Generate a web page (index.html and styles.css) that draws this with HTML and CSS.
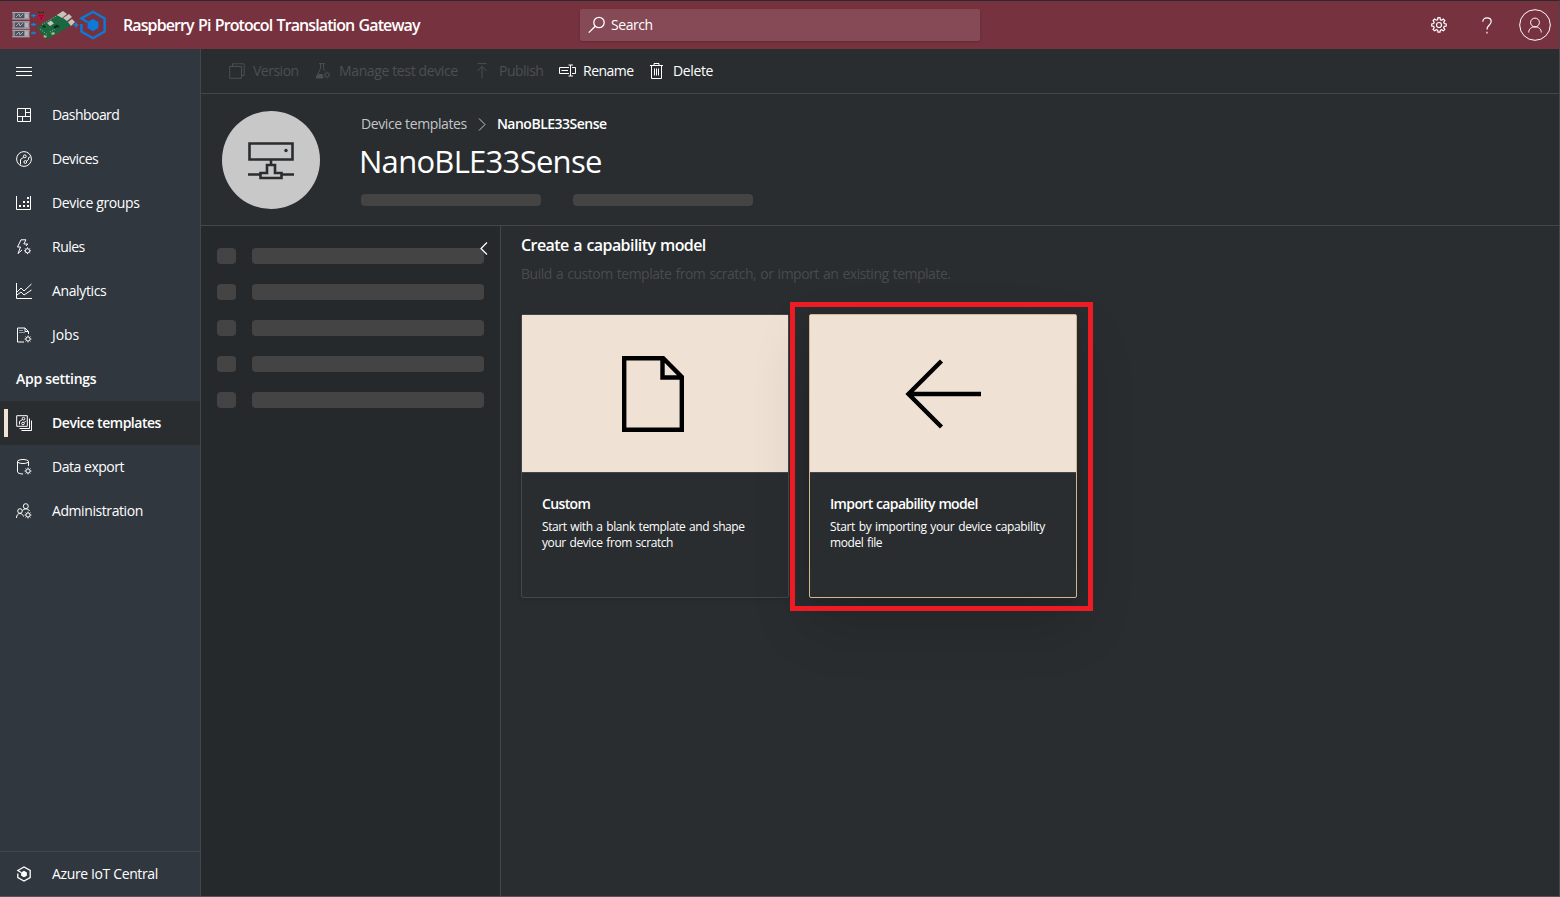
FILE: index.html
```html
<!DOCTYPE html>
<html lang="en">
<head>
<meta charset="utf-8">
<title>NanoBLE33Sense - Raspberry Pi Protocol Translation Gateway</title>
<link rel="stylesheet" href="styles.css">
</head>
<body>
<svg class="defs" width="0" height="0">
  <defs>
    <symbol id="cog" viewBox="0 0 16 16">
      <path d="M7 .7h2l.4 2 1.2.5 1.7-1.1 1.5 1.5-1.1 1.7.5 1.3 2 .4v2l-2 .4-.5 1.2 1.1 1.7-1.5 1.5-1.7-1.1-1.2.5-.4 2H7l-.4-2-1.3-.5-1.7 1.1-1.5-1.5 1.1-1.7-.5-1.2-2-.4V7l2-.4.5-1.3-1.1-1.7 1.5-1.5 1.7 1.1 1.3-.5z"/>
      <circle cx="8" cy="8" r="2.5"/>
    </symbol>
    <symbol id="mini-cog" viewBox="0 0 8 8">
      <circle cx="4" cy="4" r="2.1"/>
      <path d="M4 .6v1.2M4 6.2v1.2M.6 4h1.2M6.2 4h1.2M1.6 1.6l.8.8M5.600 5.600l.8.8M6.400 1.600l-.8.8M2.400 5.600l-.8.8"/>
    </symbol>
    <symbol id="hub" viewBox="0 0 28 30">
      <path d="M8.600 12.300L2.400 8.400 14 1.800l11.600 6.600v13.200L14 28.200 2.400 21.600V14"/>
      <path class="solid" d="M14 9l5.400 3v6.100L14 21.200l-5.400-3.100V12z"/>
    </symbol>
  </defs>
</svg>
<div class="app">
  <header class="topbar">
    <div class="brand">
      <svg class="logo" width="96" height="32" viewBox="0 0 96 32">
        <g>
          <path fill="#8d8993" d="M1.500 3h17v7.500h-17zM1.500 12.200h17v7.500h-17zM1.500 20.800h17v7.500h-17z"/>
          <path fill="#4b525e" d="M4 4.200h9v5H4zM4 13.400h9v5H4zM4 22h9v5H4z"/>
          <path fill="#b4b2b8" d="M14 4.500h3.500v4.500H14zM14 13.700h3.500v4.500H14zM14 22.300h3.500v4.500H14z"/>
          <path fill="none" stroke="#aeb6c4" stroke-width=".9" d="M5 8l3-3 1 3 3-3M5 17l3-3 1 3 3-3M5 26l3-3 1 3 3-3"/>
          <path fill="none" stroke="#c9c4ca" stroke-dasharray="1 1" d="M1.500 3.500h17M1.500 10h17M1.500 12.700h17M1.500 19.200h17M1.500 21.300h17M1.500 27.800h17"/>
        </g>
        <path fill="none" stroke="#1681d6" stroke-width="1.300" d="M20 6.700h5M22.500 5v3.500M20 15.500h5M22.500 14v3M20 24h5M22.500 22.500v3"/>
        <path fill="#173d16" d="M27 2l3 1.500L33 2l-.5 2.500h-5z"/>
        <path fill="#bd123f" d="M28 4.500h4.500l1.500 3-1.500 3-2.500 1.500-2.500-1.500L26.500 7z"/>
        <path fill="#4b0a25" d="M28.300 6h1.200v1.500h-1.200zM31 6h1.200v1.500H31zM29.600 8.500h1.300v1.700h-1.300z"/>
        <path fill="#1b6740" d="M26 18.500L47 5.500l15 9.500-22 13.500-5 1.500z"/>
        <path fill="#c6c5bb" d="M46 6l6-4 4 3-5 4zM52 9l6-4 3 3-5 4zM57 13l4-3 3 3-4 4zM36 14l4-2.500 3 3-4 2.500z"/>
        <path fill="#0c2d26" d="M31 17l2-1 2 2-2 1zM42 18l4-2.500 3 2.500-4 2.500z"/>
        <path stroke="#9eb394" stroke-dasharray="1 1.500" d="M31 15.500L47 6M29 20l8 6M39 23l9-5"/>
        <path fill="#c8b06c" d="M33 26l3 1-1.500 2-2-1zM40 24l3-1 1 2-3 1z"/>
        <path fill="none" stroke="#1681d6" stroke-width="1.600" d="M62.500 16h5M65 13.500v5"/>
        <use href="#hub" class="logo-hub" x="68" y="1" width="28" height="30"/>
      </svg>
      <span class="app-title">Raspberry Pi Protocol Translation Gateway</span>
    </div>
    <div class="search">
      <svg class="icon" width="18" height="18" viewBox="0 0 18 18"><circle cx="11" cy="6.500" r="5.200"/><path d="M7.200 10.200L.8 16.600"/></svg>
      <span class="t-search">Search</span>
    </div>
    <div class="tools">
      <svg class="icon" width="16" height="16"><use href="#cog"/></svg>
      <svg class="icon help" width="10" height="17" viewBox="0 0 10 17"><path d="M.8 4.800C.8 2.300 2.500.9 5 .9s4.200 1.400 4.200 3.700C9.200 8 5 8 5 12.400"/><path d="M5 14.800v1.600"/></svg>
      <svg class="icon user" width="32" height="32" viewBox="0 0 32 32"><circle cx="16" cy="16" r="15.300"/><circle cx="16" cy="13.500" r="4.400"/><path d="M9.700 23.500c0-3.600 2.700-5.600 6.300-5.600s6.300 2 6.300 5.600"/></svg>
    </div>
  </header>
  <div class="shell">
    <nav class="sidebar">
      <div class="nav-item"><svg class="icon" width="16" height="16" viewBox="0 0 16 16"><path d="M0 4.500h16M0 8.500h16M0 12.500h16"/></svg></div>
      <div class="nav-item"><svg class="icon" width="16" height="16" viewBox="0 0 16 16"><path d="M1.500 1.500h13v13h-13zM9.500 1.500v8M1.500 9.500h13M9.500 5.500h5M6.500 9.500v5"/></svg><span class="t-dash">Dashboard</span></div>
      <div class="nav-item"><svg class="icon" width="16" height="16" viewBox="0 0 16 16"><circle cx="8" cy="8" r="7.400"/><circle cx="8.800" cy="5.300" r="1.400"/><circle cx="9.300" cy="11" r="1.400"/><path d="M7.700 6.300L4.500 8.500v5M10.500 10.200l2-1.700V6.700l2-1"/></svg><span class="t-devices">Devices</span></div>
      <div class="nav-item"><svg class="icon" width="16" height="16" viewBox="0 0 16 16"><path d="M.5 1v13.500h14V1"/><path class="solid-dots" d="M3 10h2v2H3zM7 10h2v2H7zM11 10h2v2h-2zM7 6h2v2H7zM11 6h2v2h-2zM11 2h2v2h-2z"/></svg><span class="t-groups">Device groups</span></div>
      <div class="nav-item"><svg class="icon" width="16" height="16" viewBox="0 0 16 16"><path d="M5 .8h5L7.800 5h4L10 7M5 .8L1.500 8h3L2 14.500l4-3.500"/><use href="#mini-cog" x="7.500" y="7.800" width="8" height="8"/></svg><span class="t-rules">Rules</span></div>
      <div class="nav-item"><svg class="icon" width="16" height="16" viewBox="0 0 16 16"><path d="M.5 0v15.500H16M1 9l4-4 3 3 7.500-7M1 12l4-3 3 3 7.500-5"/></svg><span class="t-analytics">Analytics</span></div>
      <div class="nav-item"><svg class="icon" width="16" height="16" viewBox="0 0 16 16"><path d="M8 15H1.500V1H9l3.500 3.500V7M9 1v3.500h3.500"/><path d="M3.500 3.500h4M3.500 5.500h5" stroke-dasharray="1 1"/><use href="#mini-cog" x="8" y="8" width="8" height="8"/></svg><span class="t-jobs">Jobs</span></div>
      <div class="nav-heading"><span class="t-app">App settings</span></div>
      <div class="nav-item selected"><svg class="icon" width="16" height="16" viewBox="0 0 16 16"><path d="M.7.7h10.600v10.600H.7zM13.500 3.500v10H3.500M15.500 5.500v10H5.500"/><circle cx="7.500" cy="3.700" r="1.300"/><circle cx="7" cy="8.500" r="1.300"/><path d="M6.500 4.500L3.500 6.500v3M8 7.700l2-2"/></svg><span class="t-templates">Device templates</span></div>
      <div class="nav-item"><svg class="icon" width="16" height="16" viewBox="0 0 16 16"><ellipse cx="7" cy="2.500" rx="5.500" ry="2"/><path d="M1.500 2.500v10.300c0 1.200 2.500 2.200 5.500 2.200M12.500 2.500V7"/><use href="#mini-cog" x="8" y="8" width="8" height="8"/></svg><span class="t-export">Data export</span></div>
      <div class="nav-item"><svg class="icon" width="16" height="16" viewBox="0 0 16 16"><circle cx="9.800" cy="3.200" r="2.500"/><circle cx="4" cy="8" r="2.300"/><path d="M.5 15c0-3 1.500-4.500 3.500-4.500S7 12 7.500 13.500M6.500 7.500C8 5.500 12 5 13.500 8"/><use href="#mini-cog" x="8" y="8" width="8" height="8"/></svg><span class="t-admin">Administration</span></div>
      <div class="nav-item nav-footer"><svg class="icon" width="16" height="16"><use href="#hub" class="footer-hub" width="16" height="16"/></svg><span class="t-central">Azure IoT Central</span></div>
    </nav>
    <main class="main">
      <div class="commands">
        <div class="command off c-version"><svg class="icon" width="16" height="16" viewBox="0 0 16 16"><path d="M.7 3.500h11.800v11.800H.7zM3.500 3.500V.8h11.700v11.700h-2.700"/></svg><span class="t-version">Version</span></div>
        <div class="command off c-manage"><svg class="icon" width="16" height="16" viewBox="0 0 16 16"><path d="M4 .6h6M5.500.6v5L1 14.500h6M8.500.6v5L10 8"/><path class="solid" d="M3.500 11h4l1 4.500H.8z"/><use href="#mini-cog" x="8" y="8" width="8" height="8"/></svg><span class="t-manage">Manage test device</span></div>
        <div class="command off c-publish"><svg class="icon" width="10" height="16" viewBox="0 0 10 16"><path d="M.5.600h9M5 15.500v-12M.5 8L5 3.500 9.500 8"/></svg><span class="t-publish">Publish</span></div>
        <div class="command c-rename"><svg class="icon" width="17" height="16" viewBox="0 0 17 16"><path d="M10 4.500H.5v6H10M13 4.500h3.500v6H13M2.500 7.500H9M9.500 2h2v11h-2M14 2h-2.500v11H14"/></svg><span class="t-rename">Rename</span></div>
        <div class="command c-delete"><svg class="icon" width="13" height="16" viewBox="0 0 13 16"><path d="M0 2.500h13M4 2.500v-2h5v2M1.500 2.500v13h10v-13M4.500 5.500v7M6.500 5.500v7M8.500 5.500v7"/></svg><span class="t-delete">Delete</span></div>
      </div>
      <section class="hero">
        <div class="avatar">
          <svg width="46" height="38" viewBox="0 0 46 38"><path d="M1.500 1.500h43v16h-43zM23 18v5M0 32.500h12.500M33.500 32.500H46M12.500 36v-5h6.500v-8h8v8h6.500v5z"/><circle cx="38" cy="8.500" r="1.700"/></svg>
        </div>
        <div class="hero-text">
          <div class="crumbs"><span class="t-crumb">Device templates</span><svg class="icon" width="8" height="13" viewBox="0 0 8 13"><path d="M1 .500l6 6-6 6"/></svg><span class="t-current">NanoBLE33Sense</span></div>
          <h1><span class="t-title">NanoBLE33Sense</span></h1>
          <div class="ghosts"><span class="ghost"></span><span class="ghost"></span></div>
        </div>
      </section>
      <div class="body">
        <aside class="panel">
          <div class="row"><i></i><b></b></div>
          <div class="row"><i></i><b></b></div>
          <div class="row"><i></i><b></b></div>
          <div class="row"><i></i><b></b></div>
          <div class="row"><i></i><b></b></div>
          <svg class="icon collapse" width="8" height="13" viewBox="0 0 8 13"><path d="M7 .500l-6 6 6 6"/></svg>
        </aside>
        <section class="content">
          <h2><span class="t-create">Create a capability model</span></h2>
          <p class="intro"><span class="t-intro">Build a custom template from scratch, or import an existing template.</span></p>
          <div class="cards">
            <article class="card">
              <div class="art art-file"><svg width="62" height="76" viewBox="0 0 62 76"><path d="M2.200 2.200h39L59.800 21v52.800H2.200zM40.500 3v18.500H60"/></svg></div>
              <div class="copy"><h3><span class="t-custom">Custom</span></h3><p><span class="t-c1">Start with a blank template and shape</span><br><span class="t-c2">your device from scratch</span></p></div>
            </article>
            <article class="card active">
              <div class="art"><svg width="76" height="70" viewBox="0 0 76 70"><path d="M76 35H3M36.500 2L3.500 35l33 33"/></svg></div>
              <div class="copy"><h3><span class="t-import">Import capability model</span></h3><p><span class="t-i1">Start by importing your device capability</span><br><span class="t-i2">model file</span></p></div>
              <div class="callout"></div>
            </article>
          </div>
        </section>
      </div>
    </main>
  </div>
</div>
</body>
</html>
```
FILE: styles.css
```css
* { box-sizing: border-box; }
body {
  margin: 0;
  background: #292d30;
  color: #fff;
  font: 14px/20px "Open Sans", "Noto Sans", sans-serif;
  letter-spacing: -0.37px;
}
h1, h2, h3, p { margin: 0; }
span { white-space: nowrap; }
.defs { position: absolute; }
.app {
  display: flex;
  flex-direction: column;
  width: 1560px;
  height: 897px;
  overflow: hidden;
  border-top: 1px solid #292a2e;
  border-right: 1px solid #45484b;
  border-bottom: 1px solid #55585b;
}
.icon { fill: none; stroke: currentColor; stroke-width: 1; flex: none; overflow: visible; }
.solid, .solid-dots { fill: currentColor; stroke: none; }

.topbar {
  display: grid;
  grid-template-columns: 580px 400px 1fr;
  align-items: center;
  height: 48px;
  background: #77323f;
}
.brand { display: flex; align-items: center; gap: 16px; padding-left: 11px; }
.logo-hub { fill: none; stroke: #0c7ad8; stroke-width: 2.4; color: #0c7ad8; }
.app-title { font-size: 16px; font-weight: 600; letter-spacing: -0.9px; word-spacing: 1px; }
.search {
  display: flex;
  align-items: center;
  gap: 5px;
  height: 32px;
  padding-left: 8px;
  border-radius: 2px;
  background: #864956;
  box-shadow: 0 1px 3px rgba(0, 0, 0, 0.2);
}
.search .icon { stroke-width: 1.3; }
.t-search { letter-spacing: -0.45px; }
.tools { display: flex; align-items: center; justify-content: flex-end; padding-right: 8px; }
.tools .icon { stroke-width: 1.2; }
.tools .user { stroke-width: 1; }
.help { margin: 0 27px 0 35px; }

.shell { display: flex; flex: 1; min-height: 0; }
.sidebar {
  display: flex;
  flex-direction: column;
  width: 201px;
  border-right: 1px solid #44474a;
  background: #30373f;
}
.nav-item, .nav-heading { display: flex; align-items: center; gap: 20px; height: 44px; padding-left: 16px; }
.nav-heading, .selected { font-weight: 600; }
.t-dash { letter-spacing: -0.55px; }
.t-devices, .t-rules { letter-spacing: -0.5px; }
.t-jobs { letter-spacing: -0.1px; }
.t-app { letter-spacing: -0.28px; }
.t-templates, .t-export { letter-spacing: -0.47px; }
.t-admin { letter-spacing: -0.42px; }
.selected {
  background: linear-gradient(#f0e2d5, #f0e2d5) 4px 8px / 4px 28px no-repeat, #292d30;
}
.nav-footer { height: 45px; margin-top: auto; border-top: 1px solid #44474a; }
.footer-hub { stroke-width: 2.4; }

.main { display: flex; flex-direction: column; flex: 1; background: #292d30; }
.commands { display: flex; align-items: center; height: 45px; padding-left: 28px; border-bottom: 1px solid #43474a; }
.command { display: flex; align-items: center; }
.command span { padding-bottom: 1px; }
.off { color: #4c4f51; }
.c-version { gap: 8px; width: 86px; }
.t-version, .t-publish, .t-rename { letter-spacing: -0.5px; }
.c-manage { gap: 8px; width: 162px; }
.c-publish { gap: 12px; width: 82px; }
.c-rename { gap: 7px; width: 91px; }
.c-delete { gap: 10px; }

.hero { display: flex; height: 132px; padding: 17px 0 0 21px; border-bottom: 1px solid #43474a; }
.avatar { display: flex; align-items: center; justify-content: center; width: 98px; height: 98px; border-radius: 50%; background: #c8c8c8; }
.avatar svg { fill: none; stroke: #292d30; stroke-width: 2.6; margin: 2px 0 0 0; }
.avatar circle { fill: #292d30; stroke: none; }
.hero-text { display: flex; flex-direction: column; padding-left: 41px; }
.crumbs { display: flex; align-items: center; height: 27px; gap: 11px; }
.crumbs span { padding-bottom: 1px; }
.crumbs > :first-child, .crumbs .icon { color: #c4c5c6; }
.t-crumb { letter-spacing: -0.38px; }
.t-current { font-weight: 600; letter-spacing: -0.5px; }
h1 { height: 56px; margin-left: -2px; font-size: 31px; line-height: 46px; font-weight: 400; letter-spacing: -0.72px; }
.ghosts { display: flex; gap: 32px; }
.ghost { width: 180px; height: 12px; border-radius: 4px; background: #444; }

.body { display: flex; flex: 1; }
.panel {
  position: relative;
  display: flex;
  flex-direction: column;
  gap: 20px;
  width: 300px;
  padding: 22px 16px 0;
  border-right: 1px solid #43474a;
  background: #25292c;
}
.row { display: flex; gap: 16px; height: 16px; }
.row i { width: 19px; border-radius: 4px; background: #444; }
.row b { width: 232px; border-radius: 4px; background: #444; }
.collapse { position: absolute; left: 279px; top: 16px; stroke-width: 1.2; }
.content { padding: 9px 0 0 20px; }
h2 { font-size: 16px; line-height: 20px; font-weight: 600; letter-spacing: -0.58px; word-spacing: 1px; }
.intro { margin: 9px 0 29px; color: #484b4d; letter-spacing: -0.5px; word-spacing: 1px; }
.cards { display: flex; gap: 20px; padding-top: 1px; }
.card {
  position: relative;
  width: 268px;
  height: 284px;
  border: 1px solid #43474a;
  border-radius: 2px;
  background: #292d30;
  box-shadow: 0 2px 4px rgba(0, 0, 0, 0.1);
}
.card.active {
  border-color: #d4b58c;
  box-shadow: 0 26px 58px rgba(0, 0, 0, 0.16), 0 5px 14px rgba(0, 0, 0, 0.1);
}
.art { display: flex; align-items: center; justify-content: center; height: 158px; background: #efe2d5; border-bottom: 1px solid #43474a; }
.art-file { padding-right: 5px; }
.art svg { fill: none; stroke: #000; stroke-width: 4.4; }
.copy { padding: 21px 20px 0; }
h3 { font-size: 14px; line-height: 20px; font-weight: 600; letter-spacing: -0.65px; word-spacing: 0.5px; }
.copy p { margin-top: 5px; font-size: 12px; line-height: 16px; letter-spacing: -0.42px; word-spacing: 1px; }
.t-i1 { letter-spacing: -0.36px; }
.callout { position: absolute; left: -20px; top: -13px; width: 303px; height: 309px; border: 5px solid #ed1c24; }
```
